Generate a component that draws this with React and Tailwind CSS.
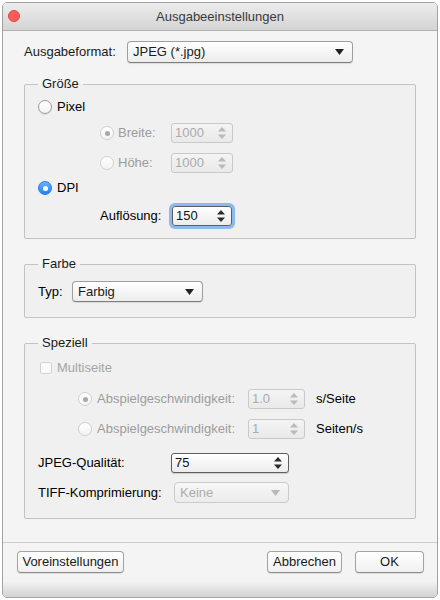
import React from "react";

const font = { fontFamily: '"Liberation Sans", Arial, sans-serif' };

const Radio = ({ checked, disabled, dot }) => {
  if (checked) {
    return (
      <span className="flex items-center justify-center w-[14px] h-[14px] rounded-full bg-[linear-gradient(to_bottom,#6cb3fa,#1a82fb)] border border-[#2a7ae0] shrink-0">
        <span className="w-[5px] h-[5px] rounded-full bg-white" />
      </span>
    );
  }
  return (
    <span
      className={
        "flex items-center justify-center w-[14px] h-[14px] rounded-full bg-[linear-gradient(to_bottom,#ffffff,#f3f3f3)] border shrink-0 " +
        (disabled ? "border-[#d0d0d0]" : "border-[#9a9a9a] shadow-[0_1px_1px_rgba(0,0,0,0.08)]")
      }
    >
      {dot && <span className="w-[5px] h-[5px] rounded-full bg-[#a8a8a8]" />}
    </span>
  );
};

const DownArrow = ({ color }) => (
  <svg width="9" height="6" viewBox="0 0 9 6">
    <path d="M0 0h9L4.5 6z" fill={color} />
  </svg>
);

const UpDown = ({ color }) => (
  <svg width="8" height="12" viewBox="0 0 8 12">
    <path d="M4 0L8 4.5H0z M0 7.5h8L4 12z" fill={color} />
  </svg>
);

const Popup = ({ value, w, h = "h-[21px]", disabled }) => (
  <div
    className={
      "flex items-center justify-between pl-[5px] pr-[8px] rounded-[4px] border " +
      w +
      " " +
      h +
      " " +
      (disabled
        ? "border-[#cbcbcb] bg-[linear-gradient(to_bottom,#f6f6f6,#ececec)] text-[#acacac]"
        : "border-[#9e9e9e] border-b-[#7e7e7e] bg-[linear-gradient(to_bottom,#ffffff,#ededed)] shadow-[0_1px_1px_rgba(0,0,0,0.1)] text-[#1a1a1a]")
    }
  >
    <span>{value}</span>
    <DownArrow color={disabled ? "#b8b8b8" : "#222"} />
  </div>
);

const Stepper = ({ value, w, disabled, focus, dark }) => (
  <div
    className={
      "flex items-center justify-between h-[20px] pl-[3px] pr-[6px] rounded-[3px] border " +
      w +
      " " +
      (disabled
        ? "border-[#c9c9c9] bg-[linear-gradient(to_bottom,#f4f4f4,#e9e9e9)] text-[#ababab]"
        : "border-[#5e5e5e] bg-[linear-gradient(to_bottom,#ffffff,#ececec)] text-[#111]") +
      (focus ? " ring-[3px] ring-[#8db8f0]" : "") +
      (dark ? " shadow-[0_1px_1px_rgba(0,0,0,0.15)]" : "")
    }
  >
    <span>{value}</span>
    <UpDown color={disabled ? "#b9b9b9" : "#2a2a2a"} />
  </div>
);

const Group = ({ title, className, children }) => (
  <fieldset className={"border border-[#c3c3c3] rounded-[2px] bg-[#f0f0f0] " + className}>
    <legend className="ml-[13px] px-[4px] leading-[16px] text-[#1a1a1a]">{title}</legend>
    {children}
  </fieldset>
);

const Button = ({ label, w }) => (
  <button
    className={
      "h-[22px] rounded-[4px] border border-[#a3a3a3] border-b-[#8c8c8c] bg-[linear-gradient(to_bottom,#ffffff,#f0f0f0)] shadow-[0_1px_1px_rgba(0,0,0,0.1)] text-[13px] text-[#1a1a1a] " +
      w
    }
  >
    {label}
  </button>
);

export default function App() {
  return (
    <div className="w-[440px] h-[600px] bg-white text-[13px] leading-[16px]" style={font}>
      <div className="ml-[2px] mt-[2px] w-[436px] h-[596px] flex flex-col border border-[#a2a2a2] rounded-[5px] overflow-hidden bg-[#f4f4f4]">
        <div className="relative flex items-center justify-center h-[28px] shrink-0 border-b border-[#b0b0b0] bg-[linear-gradient(to_bottom,#ececec,#d4d4d4)]">
          <span className="absolute left-[5px] top-[7px] w-[12px] h-[12px] rounded-full bg-[#fc5c57] border border-[#df4744]" />
          <span className="text-[#3a3a3a]">Ausgabeeinstellungen</span>
        </div>

        <div className="flex-1 px-[21px] pt-[10px]">
          <div className="flex items-center h-[22px]">
            <span className="w-[103px] text-[#1a1a1a]">Ausgabeformat:</span>
            <Popup value="JPEG (*.jpg)" w="w-[226px]" h="h-[22px]" />
          </div>

          <Group title="Größe" className="mt-[13px] pb-[11px]">
            <div className="flex items-center gap-[5px] h-[20px] mt-[5px] pl-[13px]">
              <Radio />
              <span>Pixel</span>
            </div>
            <div className="flex items-center h-[20px] mt-[6px] pl-[75px]">
              <div className="flex items-center gap-[4px] w-[71px] text-[#9c9c9c]">
                <Radio disabled dot />
                <span>Breite:</span>
              </div>
              <Stepper value="1000" w="w-[62px]" disabled />
            </div>
            <div className="flex items-center h-[20px] mt-[10px] pl-[75px]">
              <div className="flex items-center gap-[4px] w-[71px] text-[#9c9c9c]">
                <Radio disabled />
                <span>Höhe:</span>
              </div>
              <Stepper value="1000" w="w-[62px]" disabled />
            </div>
            <div className="flex items-center gap-[5px] h-[20px] mt-[5px] pl-[13px]">
              <Radio checked />
              <span>DPI</span>
            </div>
            <div className="flex items-center h-[22px] mt-[7px] pl-[75px]">
              <span className="w-[72px]">Auflösung:</span>
              <Stepper value="150" w="w-[60px]" focus />
            </div>
          </Group>

          <Group title="Farbe" className="mt-[17px] pb-[15px]">
            <div className="flex items-center h-[21px] mt-[9px] pl-[13px]">
              <span className="w-[34px]">Typ:</span>
              <Popup value="Farbig" w="w-[131px]" />
            </div>
          </Group>

          <Group title="Speziell" className="mt-[17px] pb-[15px]">
            <div className="flex items-center gap-[5px] h-[16px] mt-[9px] pl-[15px] text-[#a4a4a4]">
              <span className="w-[12px] h-[12px] rounded-[2px] border border-[#d2d2d2] bg-[#fafafa]" />
              <span>Multiseite</span>
            </div>
            <div className="flex items-center h-[20px] mt-[13px] pl-[53px]">
              <div className="flex items-center gap-[5px] w-[170px] text-[#9c9c9c]">
                <Radio disabled dot />
                <span>Abspielgeschwindigkeit:</span>
              </div>
              <Stepper value="1.0" w="w-[57px]" disabled />
              <span className="ml-[11px]">s/Seite</span>
            </div>
            <div className="flex items-center h-[20px] mt-[10px] pl-[53px]">
              <div className="flex items-center gap-[5px] w-[170px] text-[#9c9c9c]">
                <Radio disabled />
                <span>Abspielgeschwindigkeit:</span>
              </div>
              <Stepper value="1" w="w-[57px]" disabled />
              <span className="ml-[11px]">Seiten/s</span>
            </div>
            <div className="flex items-center h-[20px] mt-[14px] pl-[13px]">
              <span className="w-[133px]">JPEG-Qualität:</span>
              <Stepper value="75" w="w-[118px]" dark />
            </div>
            <div className="flex items-center h-[21px] mt-[9px] pl-[13px]">
              <span className="w-[136px]">TIFF-Komprimierung:</span>
              <Popup value="Keine" w="w-[115px]" disabled />
            </div>
          </Group>
        </div>

        <div className="h-[55px] shrink-0 border-t border-[#cdcdcd] bg-[linear-gradient(to_bottom,#f4f4f4_70%,#d2d2d2)] flex items-start pt-[8px] pl-[14px] pr-[13px]">
          <Button label="Voreinstellungen" w="w-[107px]" />
          <div className="flex-1" />
          <Button label="Abbrechen" w="w-[75px]" />
          <Button label="OK" w="w-[69px] ml-[13px]" />
        </div>
      </div>
    </div>
  );
}
